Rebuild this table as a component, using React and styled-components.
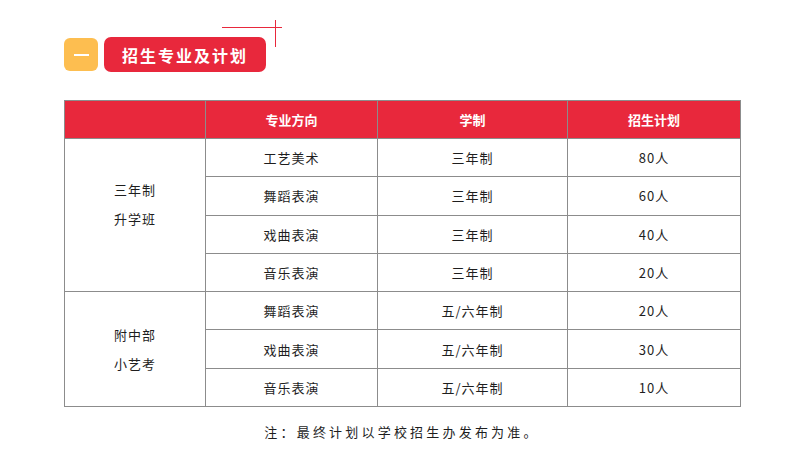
import React from "react";
import styled, { createGlobalStyle } from "styled-components";

const GlobalStyle = createGlobalStyle`
  html, body {
    margin: 0;
    padding: 0;
    background: #ffffff;
  }
  body {
    font-family: "Noto Sans CJK SC", "Noto Sans", sans-serif;
  }
`;

const RED = "#e8283c";
const ORANGE = "#fdbe50";
const LINE = "#8c8c8c";

const Page = styled.div`
  width: 812px;
  height: 449px;
  box-sizing: border-box;
  padding: 37px 72px 0 64px;
  position: relative;
  overflow: hidden;
`;

const Crosshair = styled.div`
  position: absolute;
  left: 222px;
  top: 20px;
  width: 60px;
  height: 27px;

  &::before {
    content: "";
    position: absolute;
    left: 0;
    top: 7px;
    width: 60px;
    height: 1px;
    background: ${RED};
  }
  &::after {
    content: "";
    position: absolute;
    left: 53px;
    top: 0;
    width: 1px;
    height: 27px;
    background: ${RED};
  }
`;

const Heading = styled.div`
  display: flex;
  align-items: center;
  gap: 6px;
  height: 35px;
`;

const Badge = styled.div`
  width: 34px;
  height: 33px;
  border-radius: 6px;
  background: ${ORANGE};
  display: flex;
  align-items: center;
  justify-content: center;

  &::after {
    content: "";
    width: 15px;
    height: 2px;
    background: #ffffff;
  }
`;

const TitleBox = styled.div`
  width: 162px;
  height: 35px;
  border-radius: 7px;
  background: ${RED};
  color: #ffffff;
  font-size: 16px;
  font-weight: 700;
  letter-spacing: 2px;
  display: flex;
  align-items: center;
  justify-content: center;
`;

const Table = styled.table`
  margin-top: 28px;
  width: 676px;
  border-collapse: collapse;
  table-layout: fixed;
  font-size: 13px;
  color: #1e1e1e;
`;

const HeadCell = styled.th`
  background: ${RED};
  color: #ffffff;
  font-weight: 700;
  height: 37px;
  padding: 0;
  border: 1px solid ${LINE};
  text-align: center;
`;

const Cell = styled.td`
  height: 37.3px;
  padding: 0;
  border: 1px solid ${LINE};
  text-align: center;
  letter-spacing: 1px;
`;

const GroupCell = styled(Cell)`
  line-height: 29px;
  padding-bottom: ${(p) => p.$shift || 0}px;
`;

const Note = styled.p`
  margin: 15px 0 0;
  width: 676px;
  text-align: center;
  font-size: 13px;
  letter-spacing: 3.2px;
  color: #1e1e1e;
`;

const groups = [
  {
    name: ["三年制", "升学班"],
    shift: 22,
    rows: [
      ["工艺美术", "三年制", "80人"],
      ["舞蹈表演", "三年制", "60人"],
      ["戏曲表演", "三年制", "40人"],
      ["音乐表演", "三年制", "20人"],
    ],
  },
  {
    name: ["附中部", "小艺考"],
    shift: 0,
    rows: [
      ["舞蹈表演", "五/六年制", "20人"],
      ["戏曲表演", "五/六年制", "30人"],
      ["音乐表演", "五/六年制", "10人"],
    ],
  },
];

export default function App() {
  return (
    <Page>
      <GlobalStyle />
      <Crosshair />
      <Heading>
        <Badge />
        <TitleBox>招生专业及计划</TitleBox>
      </Heading>
      <Table>
        <colgroup>
          <col style={{ width: 141 }} />
          <col style={{ width: 172 }} />
          <col style={{ width: 190 }} />
          <col style={{ width: 173 }} />
        </colgroup>
        <thead>
          <tr>
            <HeadCell />
            <HeadCell>专业方向</HeadCell>
            <HeadCell>学制</HeadCell>
            <HeadCell>招生计划</HeadCell>
          </tr>
        </thead>
        <tbody>
          {groups.map((g) =>
            g.rows.map((r, i) => (
              <tr key={g.name[0] + i}>
                {i === 0 && (
                  <GroupCell rowSpan={g.rows.length} $shift={g.shift}>
                    {g.name[0]}
                    <br />
                    {g.name[1]}
                  </GroupCell>
                )}
                <Cell>{r[0]}</Cell>
                <Cell>{r[1]}</Cell>
                <Cell>{r[2]}</Cell>
              </tr>
            ))
          )}
        </tbody>
      </Table>
      <Note>注：最终计划以学校招生办发布为准。</Note>
    </Page>
  );
}
